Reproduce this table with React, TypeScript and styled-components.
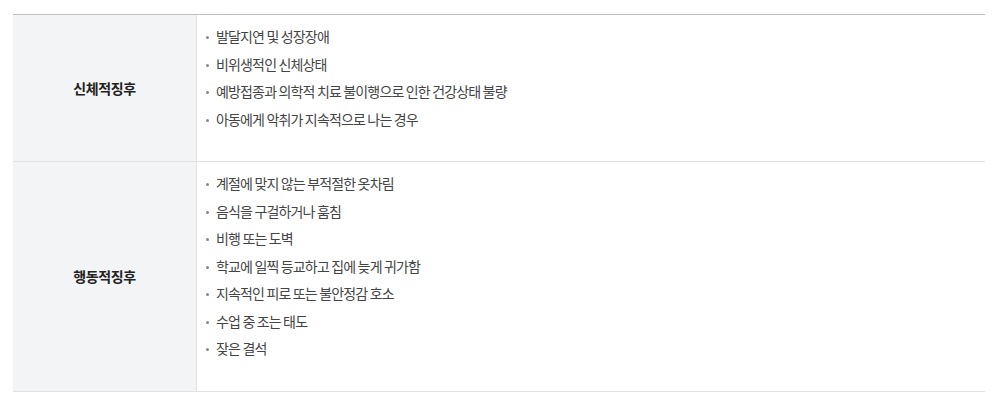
import { FunctionComponent } from "react";
import styled, { createGlobalStyle } from "styled-components";

const GlobalStyle = createGlobalStyle`
  html, body {
    margin: 0;
    padding: 0;
    background: #ffffff;
  }
  body {
    font-family: "Noto Sans CJK KR", "Noto Sans", sans-serif;
  }
`;

type Sign = {
  title: string;
  items: string[];
};

const signs: Sign[] = [
  {
    title: "신체적징후",
    items: [
      "발달지연 및 성장장애",
      "비위생적인 신체상태",
      "예방접종과 의학적 치료 불이행으로 인한 건강상태 불량",
      "아동에게 악취가 지속적으로 나는 경우",
    ],
  },
  {
    title: "행동적징후",
    items: [
      "계절에 맞지 않는 부적절한 옷차림",
      "음식을 구걸하거나 훔침",
      "비행 또는 도벽",
      "학교에 일찍 등교하고 집에 늦게 귀가함",
      "지속적인 피로 또는 불안정감 호소",
      "수업 중 조는 태도",
      "잦은 결석",
    ],
  },
];

const Page = styled.div`
  padding: 14px 14px 0 13px;
`;

const Table = styled.div`
  border-top: 1px solid #bdbdbd;
  display: flex;
  flex-direction: column;
`;

const Row = styled.div`
  display: grid;
  grid-template-columns: 184px 1fr;
  border-bottom: 1px solid #e2e2e2;
`;

const HeadCell = styled.div`
  background-color: #f3f4f6;
  border-right: 1px solid #e2e2e2;
  display: flex;
  align-items: center;
  justify-content: center;
  font-size: 14px;
  font-weight: 700;
  color: #222222;
  letter-spacing: -0.03em;
`;

const BodyCell = styled.ul`
  list-style: none;
  margin: 0;
  padding: 8px 0 28px 8px;
`;

const Item = styled.li`
  position: relative;
  padding-left: 11px;
  font-size: 14px;
  line-height: 27.5px;
  color: #444444;
  letter-spacing: -0.06em;

  &::before {
    content: "";
    position: absolute;
    left: 1px;
    top: 13px;
    width: 3px;
    height: 3px;
    border-radius: 50%;
    background-color: #888888;
  }
`;

const SignRow: FunctionComponent<{ sign: Sign }> = ({ sign }) => (
  <Row>
    <HeadCell>{sign.title}</HeadCell>
    <BodyCell>
      {sign.items.map((item) => (
        <Item key={item}>{item}</Item>
      ))}
    </BodyCell>
  </Row>
);

const App: FunctionComponent = () => {
  return (
    <>
      <GlobalStyle />
      <Page>
        <Table>
          {signs.map((sign) => (
            <SignRow key={sign.title} sign={sign} />
          ))}
        </Table>
      </Page>
    </>
  );
};

export default App;
